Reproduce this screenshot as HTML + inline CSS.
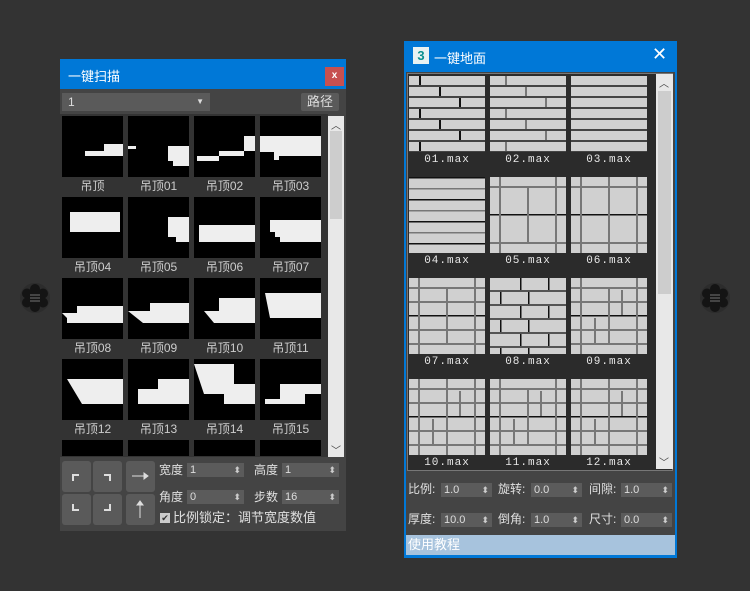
<!DOCTYPE html>
<html><head><meta charset="utf-8"><style>
*{margin:0;padding:0;box-sizing:border-box}
body{width:750px;height:591px;background:#333;position:relative;overflow:hidden;font-family:"Liberation Sans","Noto Sans CJK SC",sans-serif;color:#ddd}
.a{position:absolute}
.lt{position:absolute;width:61px;height:61px;background:#000}
.lt svg{display:block}
.lb{position:absolute;width:61px;text-align:center;font-size:12px;color:#ccc;line-height:14px}
.ft{position:absolute;width:76px;height:76px;background:#d0d0d0}
.fl{position:absolute;width:76px;text-align:center;font-size:11px;letter-spacing:1px;color:#e8e8e8;font-family:"Liberation Mono",monospace}
.btn{position:absolute;background:#5a5a5a;border-radius:3px}
.sp{position:absolute;height:14px;background:#5b5b5b;font-size:11px;color:#ddd;padding-left:3px;line-height:14px}
.sp:after{content:"⬍";position:absolute;right:3px;top:0;font-size:9px;color:#ccc}
.lab{position:absolute;font-size:12px;color:#e0e0e0;line-height:14px}
</style></head><body>
<svg class="a" style="left:19px;top:282px" width="32" height="32" viewBox="0 0 32 32"><circle cx="16" cy="16" r="15" fill="#2c2c2c"/><g fill="#141414"><circle cx="16" cy="7" r="5"/><circle cx="16" cy="25" r="5"/><circle cx="8" cy="11.5" r="5"/><circle cx="24" cy="11.5" r="5"/><circle cx="8" cy="20.5" r="5"/><circle cx="24" cy="20.5" r="5"/><circle cx="16" cy="16" r="9"/></g><g stroke="#555" stroke-width="1.5"><line x1="11" y1="13" x2="21" y2="13"/><line x1="11" y1="16" x2="21" y2="16"/><line x1="11" y1="19" x2="21" y2="19"/></g></svg>
<svg class="a" style="left:699px;top:282px" width="32" height="32" viewBox="0 0 32 32"><circle cx="16" cy="16" r="15" fill="#2c2c2c"/><g fill="#141414"><circle cx="16" cy="7" r="5"/><circle cx="16" cy="25" r="5"/><circle cx="8" cy="11.5" r="5"/><circle cx="24" cy="11.5" r="5"/><circle cx="8" cy="20.5" r="5"/><circle cx="24" cy="20.5" r="5"/><circle cx="16" cy="16" r="9"/></g><g stroke="#555" stroke-width="1.5"><line x1="11" y1="13" x2="21" y2="13"/><line x1="11" y1="16" x2="21" y2="16"/><line x1="11" y1="19" x2="21" y2="19"/></g></svg>

<div class="a" style="left:60px;top:59px;width:286px;height:472px;background:#444"></div>
<div class="a" style="left:60px;top:59px;width:286px;height:30px;background:#0078d7"></div>
<div class="a" style="left:68px;top:66px;font-size:13px;color:#fff">一键扫描</div>
<div class="a" style="left:325px;top:67px;width:19px;height:19px;background:#c75050;color:#fff;font-size:10px;text-align:center;line-height:18px;font-weight:bold">x</div>
<div class="a" style="left:62px;top:93px;width:148px;height:18px;background:#5a5a5a;font-size:12px;line-height:18px;padding-left:6px;color:#ddd">1<span style="position:absolute;right:6px;top:0;font-size:8px">▼</span></div>
<div class="a" style="left:301px;top:93px;width:38px;height:18px;background:#5a5a5a;border-radius:2px;font-size:13px;line-height:18px;text-align:center;color:#ddd">路径</div>
<div class="a" style="left:60px;top:114px;width:268px;height:343px;background:#333"></div>
<div class="a" style="left:328px;top:116px;width:16px;height:341px;background:#e8e8e8"></div>
<div class="a" style="left:330px;top:131px;width:12px;height:88px;background:#cdcdcd"></div>
<div class="a" style="left:331px;top:117px;font-size:10px;color:#444">︿</div>
<div class="a" style="left:331px;top:442px;font-size:10px;color:#444">﹀</div>

<div id="lg"></div>

<div class="a" style="left:60px;top:457px;width:286px;height:74px;background:#444"></div>
<div class="btn" style="left:62px;top:461px;width:29px;height:31px"></div>
<div class="btn" style="left:93px;top:461px;width:29px;height:31px"></div>
<div class="btn" style="left:62px;top:494px;width:29px;height:31px"></div>
<div class="btn" style="left:93px;top:494px;width:29px;height:31px"></div>
<div class="btn" style="left:126px;top:461px;width:29px;height:31px"></div>
<div class="btn" style="left:126px;top:494px;width:29px;height:31px"></div>
<svg class="a" style="left:62px;top:461px" width="93" height="64"><g stroke="#ddd" stroke-width="2" fill="none"><path d="M11 20V14H17"/><path d="M42 14H48V20"/><path d="M11 43V49H17"/><path d="M42 49H48V43"/></g><g stroke="#ddd" stroke-width="1" fill="#ddd"><path d="M70 15H85" /><path d="M82 12L86 15L82 18Z"/><path d="M78 57V41"/><path d="M75 44L78 40L81 44Z"/></g></svg>
<div class="lab" style="left:159px;top:463px">宽度</div>
<div class="sp" style="left:187px;top:463px;width:57px">1</div>
<div class="lab" style="left:254px;top:463px">高度</div>
<div class="sp" style="left:282px;top:463px;width:57px">1</div>
<div class="lab" style="left:159px;top:490px">角度</div>
<div class="sp" style="left:187px;top:490px;width:57px">0</div>
<div class="lab" style="left:254px;top:490px">步数</div>
<div class="sp" style="left:282px;top:490px;width:57px">16</div>
<div class="a" style="left:160px;top:513px;width:10px;height:10px;background:#ccc;font-size:9px;color:#333;line-height:10px;text-align:center">✔</div>
<div class="lab" style="left:173px;top:511px;font-size:13px">比例锁定：调节宽度数值</div>

<div class="a" style="left:404px;top:41px;width:273px;height:517px;background:#0078d7"></div>
<div class="a" style="left:406px;top:72px;width:269px;height:463px;background:#444"></div>
<div class="a" style="left:407px;top:73px;width:266px;height:398px;background:#2b2b2b;border:1px solid #777"></div>
<div class="a" style="left:413px;top:47px;width:16px;height:17px;background:#e8f2f2;color:#0a8f8f;font-size:13px;font-weight:bold;text-align:center;line-height:17px">3</div>
<div class="a" style="left:434px;top:48px;font-size:13px;color:#fff">一键地面</div>
<div class="a" style="left:652px;top:44px;font-size:18px;color:#fff">✕</div>
<div class="a" style="left:656px;top:74px;width:17px;height:395px;background:#e8e8e8"></div>
<div class="a" style="left:658px;top:91px;width:13px;height:203px;background:#cdcdcd"></div>
<div class="a" style="left:659px;top:75px;font-size:10px;color:#444">︿</div>
<div class="a" style="left:659px;top:454px;font-size:10px;color:#444">﹀</div>
<div id="fg"></div>

<div class="lab" style="left:408px;top:482px">比例:</div>
<div class="sp" style="left:441px;top:483px;width:51px">1.0</div>
<div class="lab" style="left:498px;top:482px">旋转:</div>
<div class="sp" style="left:531px;top:483px;width:51px">0.0</div>
<div class="lab" style="left:589px;top:482px">间隙:</div>
<div class="sp" style="left:621px;top:483px;width:51px">1.0</div>
<div class="lab" style="left:408px;top:512px">厚度:</div>
<div class="sp" style="left:441px;top:513px;width:51px">10.0</div>
<div class="lab" style="left:498px;top:512px">倒角:</div>
<div class="sp" style="left:531px;top:513px;width:51px">1.0</div>
<div class="lab" style="left:589px;top:512px">尺寸:</div>
<div class="sp" style="left:621px;top:513px;width:51px">0.0</div>
<div class="a" style="left:406px;top:535px;width:269px;height:20px;background:#a7c3dd;color:#fff;font-size:13px;line-height:19px;padding-left:2px">使用教程</div>

<script>
var shapes=[
"M0 28H42V35H23V40H61V28Z","M0 33H8V30H40V45H45V50H61V30H0","M3 45H25V35H61V20H50V40H3Z","M0 36H14V44H19V40H61V20H0","M8 15H58V35H8","M0 20H40V40H48V45H61V20","M5 28H61V45H5","M10 23H61V45H20V40H15V35H10Z",
"M0 35H15V28H61V45H5V40Z","M0 33H22V25H61V45H15Z","M10 33H25V20H61V45H20Z","M5 15H61V40H10Z","M5 20H61V45H20Z","M10 30H30V20H61V45H10Z","M0 5H40V25H61V45H30V35H10Z","M5 40H20V25H61V35H45V45H5Z"];
var names=["吊顶","吊顶01","吊顶02","吊顶03","吊顶04","吊顶05","吊顶06","吊顶07","吊顶08","吊顶09","吊顶10","吊顶11","吊顶12","吊顶13","吊顶14","吊顶15"];
var xs=[62,128,194,260],h="";
for(var i=0;i<20;i++){var r=Math.floor(i/4),c=i%4,y=116+r*81;
 if(r<4){h+='<div class="lt" style="left:'+xs[c]+'px;top:'+y+'px"><svg width="61" height="61"><path d="'+shapes[i]+'" fill="#eee"/></svg></div>';
 h+='<div class="lb" style="left:'+xs[c]+'px;top:'+(y+63)+'px">'+names[i]+'</div>';}
 else h+='<div class="lt" style="left:'+xs[c]+'px;top:'+y+'px;height:16px"></div>';}
document.getElementById('lg').innerHTML=h;
var fx=[409,490,571],g="";
function tile(k){var s='';var L='#777',B='#111';
 if(k==3){for(var y=0;y<76;y+=11)s+='<rect x="0" y="'+y+'" width="76" height="1.5" fill="'+(y%22?L:B)+'"/>';return s;}
 if(k<3){for(var y=0;y<76;y+=11){s+='<rect x="0" y="'+(y+9)+'" width="76" height="2" fill="#444"/>';if(k<2){var o=(y/11)%3*20+10+k*5;s+='<rect x="'+o+'" y="'+y+'" width="2" height="9" fill="'+(k?L:B)+'"/>';}}return s;}
 if(k==7){for(var y=0;y<76;y+=14){s+='<rect x="0" y="'+(y+12)+'" width="76" height="2" fill="#555"/>';var o=(y/14)%2?10:30;s+='<rect x="'+o+'" y="'+y+'" width="1.5" height="12" fill="#111"/><rect x="'+(o+28)+'" y="'+y+'" width="1.5" height="12" fill="#111"/>';}return s;}
 s+='<rect x="0" y="9" width="76" height="2" fill="'+L+'"/><rect x="0" y="65" width="76" height="2" fill="'+L+'"/><rect x="0" y="37" width="76" height="1.5" fill="#111"/>';
 s+='<rect x="9" y="0" width="2" height="76" fill="'+L+'"/><rect x="37" y="'+(k%2?0:10)+'" width="2" height="'+(k%2?76:56)+'" fill="'+L+'"/><rect x="65" y="0" width="2" height="76" fill="'+L+'"/>';
 if(k>=6){s+='<rect x="0" y="23" width="76" height="2" fill="'+L+'"/><rect x="0" y="51" width="76" height="2" fill="'+L+'"/>';}
 if(k>=8){s+='<rect x="23" y="40" width="2" height="25" fill="'+L+'"/><rect x="50" y="12" width="2" height="25" fill="'+L+'"/>';}
 return s;}
for(var i=0;i<12;i++){var r=Math.floor(i/3),c=i%3,y=76+r*101;
 g+='<div class="ft" style="left:'+fx[c]+'px;top:'+y+'px"><svg width="76" height="76">'+tile(i)+'</svg></div>';
 g+='<div class="fl" style="left:'+fx[c]+'px;top:'+(y+78)+'px">'+(i<9?'0':'')+(i+1)+'.max</div>';}
document.getElementById('fg').innerHTML=g;
</script>
</body></html>
